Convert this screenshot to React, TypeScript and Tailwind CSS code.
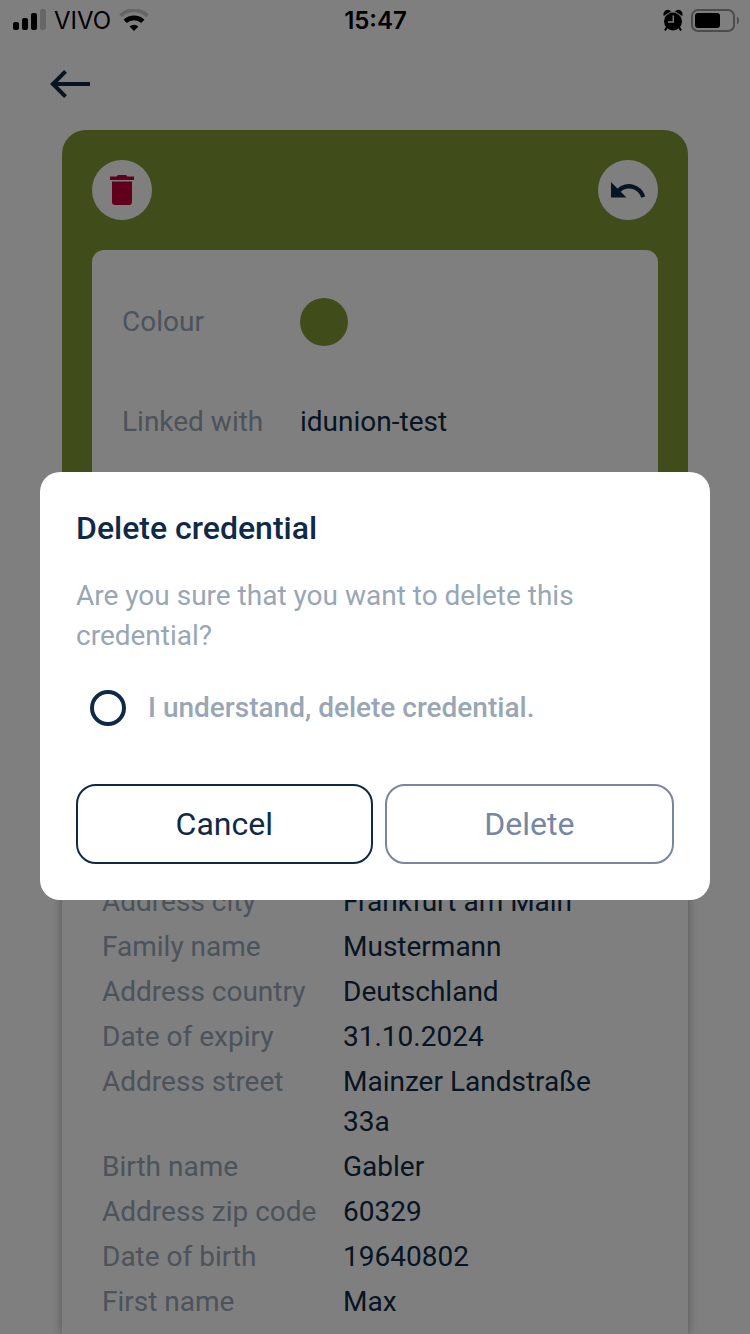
import { useState } from "react";

const attributes = [
  { label: "Address city", value: "Frankfurt am Main" },
  { label: "Family name", value: "Mustermann" },
  { label: "Address country", value: "Deutschland" },
  { label: "Date of expiry", value: "31.10.2024" },
  { label: "Address street", value: "Mainzer Landstraße 33a" },
  { label: "Birth name", value: "Gabler" },
  { label: "Address zip code", value: "60329" },
  { label: "Date of birth", value: "19640802" },
  { label: "First name", value: "Max" },
];

function StatusBar() {
  return (
    <div className="grid h-[42px] grid-cols-3 items-center pr-[11px] pl-3 font-['Inter',sans-serif] text-2xl text-black">
      <div className="flex items-center gap-2">
        <svg width="34" height="24" viewBox="0 0 34 24" aria-hidden="true">
          <rect x="1" y="13" width="6" height="8" rx="2" />
          <rect x="10" y="9" width="6" height="12" rx="2" />
          <rect x="19" y="4" width="6" height="17" rx="2" />
          <rect x="28" y="0" width="6" height="21" rx="2" opacity="0.2" />
        </svg>
        <span>VIVO</span>
        <svg width="30" height="24" viewBox="0 0 30 24" fill="none" stroke="#000" aria-hidden="true">
          <path d="M1.5 6.8A19.5 19.5 0 0 1 28.5 6.8" strokeWidth="4" opacity="0.2" />
          <path d="M6.2 12.4A12.8 12.8 0 0 1 23.8 12.4" strokeWidth="4.6" />
          <path d="M15 22L10.6 17.6A6.4 6.4 0 0 1 19.4 17.6Z" fill="#000" stroke="none" />
        </svg>
      </div>
      <span className="text-center font-semibold">15:47</span>
      <div className="flex items-center justify-end gap-2">
        <svg width="20" height="24" viewBox="0 0 20 24" aria-hidden="true">
          <circle cx="10" cy="12.5" r="9" />
          <path d="M1.2 5.8A3.6 3.6 0 0 1 6.8 2.2Z" stroke="#000" strokeWidth="1.4" />
          <path d="M18.8 5.8A3.6 3.6 0 0 0 13.2 2.2Z" stroke="#000" strokeWidth="1.4" />
          <path d="M1.4 8L8.8 2.6M18.6 8L11.2 2.6" stroke="#7f7f7f" strokeWidth="0.8" />
          <path d="M4 18L2 21.4M16 18L18 21.4" stroke="#000" strokeWidth="2" />
          <path d="M10.3 6.5V13H5" stroke="#fff" strokeWidth="1.4" fill="none" />
        </svg>
        <svg width="48" height="26" viewBox="0 0 48 26" aria-hidden="true">
          <rect x="1" y="2" width="42" height="21" rx="6" fill="none" stroke="#000" strokeWidth="2" opacity="0.4" />
          <rect x="4" y="5" width="25" height="15" rx="3" />
          <path d="M46 8.5V16.5Q48 15.5 48 12.5T46 8.5Z" opacity="0.4" />
        </svg>
      </div>
    </div>
  );
}

function CredentialPage() {
  return (
    <div className="flex h-screen flex-col overflow-hidden bg-white">
      <StatusBar />
      <header className="flex h-[88px] px-[50px] pt-7">
        <a href="#back" aria-label="Back" className="text-[#0f2a47]">
          <svg width="40" height="28" viewBox="0 0 40 28" fill="none" stroke="currentColor" strokeWidth="4" aria-hidden="true">
            <path d="M40 14H3M15.5 1.4L2.9 14L15.5 26.6" />
          </svg>
        </a>
      </header>
      <main className="mx-[62px] flex flex-1 flex-col gap-10">
        <section className="flex min-h-[672px] flex-col gap-[30px] rounded-3xl bg-[#819a37] p-[30px]">
          <div className="flex justify-between">
            <button type="button" aria-label="Delete" className="flex size-[60px] items-center justify-center rounded-full bg-white">
              <svg width="24" height="30" viewBox="0 0 24 30" fill="#c0003a" aria-hidden="true">
                <path d="M0 1.5H6.5L8 0H16L17.5 1.5H24V5H0Z" />
                <path d="M2 6.5H22V27A3 3 0 0 1 19 30H5A3 3 0 0 1 2 27Z" />
              </svg>
            </button>
            <button type="button" aria-label="Undo" className="flex size-[60px] items-center justify-center rounded-full bg-white">
              <svg width="34" height="16" viewBox="0 0 34 16" fill="#0f2a47" aria-hidden="true">
                <path d="M0 0V15.5H15.5L9.7 9.7A12.6 12.6 0 0 1 30.2 15.7L34.2 14.4A17 17 0 0 0 6.4 6.4Z" />
              </svg>
            </button>
          </div>
          <dl className="flex-1 rounded-xl bg-white px-[30px] pt-12 text-[28px]/10">
            <div className="flex items-center">
              <dt className="w-[178px] text-[#98a6b6]">Colour</dt>
              <dd className="size-12 rounded-full bg-[#819a37]" />
            </div>
            <div className="mt-14 flex">
              <dt className="w-[178px] text-[#98a6b6]">Linked with</dt>
              <dd>idunion-test</dd>
            </div>
          </dl>
        </section>
        <dl className="flex flex-1 flex-col gap-[5px] bg-white px-10 pt-10 text-[28px]/10 shadow-[0_0_10px_rgba(0,0,0,0.35)]">
          {attributes.map(({ label, value }) => (
            <div key={label} className="flex">
              <dt className="w-[241px] shrink-0 text-[#98a6b6]">{label}</dt>
              <dd className="pr-10">{value}</dd>
            </div>
          ))}
        </dl>
      </main>
    </div>
  );
}

function DeleteDialog() {
  const [confirmed, setConfirmed] = useState(false);
  return (
    <div className="fixed inset-0 flex items-center bg-black/50 px-10 pt-[38px]">
      <div role="dialog" aria-modal="true" aria-labelledby="dialog-title" className="w-full rounded-[20px] bg-white p-9">
        <h1 id="dialog-title" className="text-[32px]/10 font-medium">Delete credential</h1>
        <p className="mt-7 text-[28px]/10 text-[#98a6b6]">Are you sure that you want to delete this credential?</p>
        <label className="mt-8 ml-3.5 flex items-center gap-[22px] text-[28px]/10 font-medium text-[#98a6b6]">
          <input
            type="checkbox"
            checked={confirmed}
            onChange={(event) => setConfirmed(event.target.checked)}
            className="size-9 appearance-none rounded-full border-4 border-[#0f2a47] checked:bg-[#0f2a47]"
          />
          I understand, delete credential.
        </label>
        <div className="mt-14 flex gap-3 text-[32px]/10">
          <button type="button" className="h-20 flex-auto rounded-[20px] border-2 border-[#0f2a47]">
            Cancel
          </button>
          <button
            type="button"
            disabled={!confirmed}
            className="h-20 flex-auto rounded-[20px] border-2 border-[#0f2a47] disabled:border-[#7686a3] disabled:text-[#7686a3]"
          >
            Delete
          </button>
        </div>
      </div>
    </div>
  );
}

export default function App() {
  return (
    <div className="font-['Roboto',sans-serif] text-[#0f2a47]">
      <CredentialPage />
      <DeleteDialog />
    </div>
  );
}
